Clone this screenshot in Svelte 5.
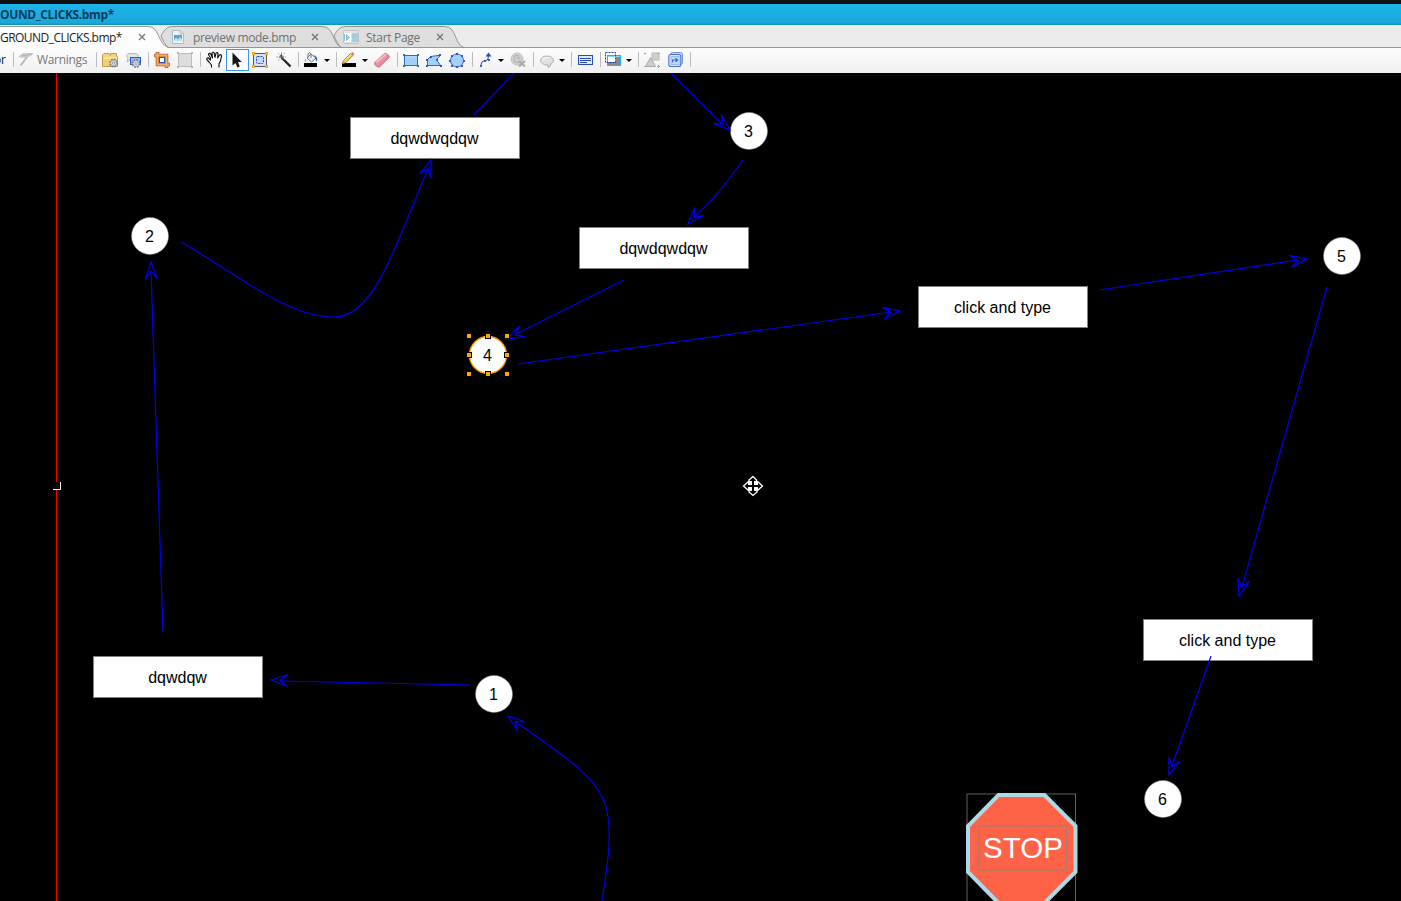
<script>
  const gear = (x, y) =>
    `<circle cx="${x}" cy="${y}" r="3.6" fill="#d5d8dc" stroke="#70757c" stroke-width="1.6" stroke-dasharray="1.7 1.1"/><circle cx="${x}" cy="${y}" r="3" fill="#dfe2e5" stroke="#8a8f96" stroke-width=".7"/><circle cx="${x}" cy="${y}" r="1.1" fill="#fff" stroke="#777" stroke-width=".7"/>`;
  const dots = (pts, c) => pts.map(([x, y]) => `<rect x="${x}" y="${y}" width="2" height="2" fill="${c}"/>`).join('');

  // x is the left edge of each item along the toolbar, w its width
  const tools = [
    { x: 13, sep: true },
    { x: 18, w: 17, art: `<path d="M0 6 5 2H15.500L12 6 11 5 3.500 15 1.500 14 7 7Z" fill="#c9c9c9"/><path d="M4 5 14 3M3 14 10 5" stroke="#b4b4b4" fill="none"/>` },
    { x: 37, w: 52, label: 'Warnings' },
    { x: 96, sep: true },
    { x: 102, w: 18, art: `<path d="M.5 15.500V4L2 2.500H7L8.500 4.500V2.500H14.500V5L15.500 6V15.500Z" fill="#f3d47c" stroke="#c39c4b"/><path d="M1.500 7H15" stroke="#fff0b8"/><path d="M1 8H15V15H1Z" fill="#efcf77"/>${gear(11.5, 12)}` },
    { x: 126, w: 18, art: `<path d="M4 9 1 11 2 8Q-1 4 3 2.500H9Q13 3 12 6Q11 9 7 9Z" fill="#e2e5e9" stroke="#b5bac1"/><rect x="4.500" y="6.500" width="10" height="7" fill="#8cbcf3" stroke="#285bc5"/>${gear(10, 12.5)}` },
    { x: 148, sep: true },
    { x: 154, w: 17, art: `<path d="M3.500 1V13.500H16M0 4.500H12.500V17" fill="none" stroke="#b9642a" stroke-width="3.600"/><path d="M3.500 1.700V13.500H15.300M.7 4.500H12.500V16.300" fill="none" stroke="#f2ae68" stroke-width="1.800"/><rect x="5.500" y="6.500" width="5" height="5" fill="#fff" stroke="#2358be"/>` },
    { x: 177, w: 17, art: `<rect x="1.500" y="2.500" width="13" height="13" fill="#dcdcdc" stroke="#bdbdbd"/>${dots([[0,1],[14,1],[0,15],[14,15]], '#b4b4b4')}` },
    { x: 200, sep: true },
    { x: 206, w: 18, art: `<path d="M5.500 16.500V14L3 11 .8 8.500Q.5 6.500 2.500 7L4.500 9V7L2.500 3.500Q3 1.500 4.800 3L6.500 7 6 2Q7 .5 8.200 2L9 6.500 10 2Q11.500 .8 12 2.800L11.600 7 13.500 4Q15.500 3 15.500 5L14.500 10 13 13V16.500" fill="#fff" stroke="#111" stroke-width="1.150" stroke-linejoin="round"/>` },
    { x: 226, w: 23, on: true, art: `<path d="M5.500 1.500V14.500L8.500 12 10.500 16.500 12.800 15.500 11 11H14.800Z" fill="#161616"/>` },
    { x: 252, w: 17, art: `<rect x="1.500" y="2.500" width="13" height="13" fill="#d8e3f5" stroke="#555"/><path d="M0 1H3V4H0ZM13 1H16V4H13ZM0 14H3V17H0ZM13 14H16V17H13Z" fill="#f9ae1c"/><rect x="4.500" y="5.500" width="7" height="7" rx="1" fill="#c6d7ff" stroke="#2948cc" stroke-dasharray="2 1"/>` },
    { x: 276, w: 17, art: `<path d="M6 7 14.500 15.500" stroke="#222" stroke-width="2.300"/><path d="M5.500 1V10M0 6H10M2 2 9 9M2 10 9 2" stroke="#a8a8a8" stroke-dasharray="2 1"/><path d="M5.500 3V8M3 6H8M4 4 7 8" stroke="#555"/>` },
    { x: 298, sep: true },
    { x: 304, w: 17, art: `<path d="M3 7 7 3 12 7 7.500 11Z" fill="#eef3f8" stroke="#777"/><path d="M4 6V3Q5 0 7 3V7" fill="none" stroke="#6b7582"/><path d="M10 4Q15 6 12.500 11L11 7Z" fill="#3a78c6"/><path d="M2 8Q0 10 2 11" fill="none" stroke="#8baac5"/><path d="M0 12H13V16H0Z" fill="#000"/>` },
    { x: 324, w: 7, drop: true },
    { x: 336, sep: true },
    { x: 341, w: 17, art: `<path d="M1 12H15V16H1Z" fill="#000"/><path d="M1 13 2.500 9.500 9.500 2.500 12 4.500 5 11.500Z" fill="#eacb54" stroke="#8d7631" stroke-width=".8"/><path d="M9.500 2.500 11.500 1 13.500 3 12 4.500Z" fill="#db7883"/><path d="M3.500 9.500 10.500 3" stroke="#fff0a5"/>` },
    { x: 362, w: 7, drop: true },
    { x: 374, w: 17, art: `<path d="M.7 11.500 10.500 2.500Q12 1.500 14.800 4.500 16 6 14.700 7L5.500 16Q4 16.500 1.500 14.500 .3 13 .7 11.500Z" fill="#e994a1" stroke="#c97483"/><path d="M2 11.500 12 3" stroke="#f6b9c1" stroke-width="2"/><path d="M5 14.500 14 6" stroke="#d87a8a"/>` },
    { x: 397, sep: true },
    { x: 403, w: 17, art: `<rect x="1.500" y="4.500" width="13" height="10" fill="#a2d0fb" stroke="#3a62c8"/>${dots([[0,3],[14,3],[0,14],[14,14]], '#23855d')}<path d="M3 6H13" stroke="#b8deff"/>` },
    { x: 426, w: 17, art: `<path d="M1.500 14.500V8.500L4.500 5.500 12 4.500H14.500L10.500 8.500 14.500 14.500Z" fill="#a2d0fb" stroke="#3a62c8"/>${dots([[0,14],[0,8],[4,5],[13,3],[10,8],[14,14]], '#3159b8')}` },
    { x: 449, w: 17, art: `<circle cx="8" cy="9.500" r="6.500" fill="#a2d0fb" stroke="#3a62c8"/>${dots([[7,2],[2,4],[12,4],[0,9],[14,9],[2,14],[12,14],[7,15]], '#3159b8')}` },
    { x: 472, sep: true },
    { x: 479, w: 17, art: `<path d="M2 15Q2 9.500 7 9.500 9.500 9.500 9.500 3" fill="none" stroke="#2f59bb" stroke-width="1.100"/><path d="M6.500 5.500 9.500 1.500 12.500 5.500Z" fill="#2450b5"/>${dots([[1,14],[5,9],[9,8]], '#3560bb')}` },
    { x: 498, w: 7, drop: true },
    { x: 510, w: 18, art: `<circle cx="7" cy="8" r="6" fill="#cfcfcf" stroke="#c2c2c2"/><path d="M9 5Q4 3 4 8T9 11M7 7H10" fill="none" stroke="#aaa"/><path d="M9 10 15 15.500M15 10 9 15.500" stroke="#aaa" stroke-width="2"/>` },
    { x: 533, sep: true },
    { x: 540, w: 16, art: `<ellipse cx="7" cy="9.500" rx="6.500" ry="4.500" fill="#e2e2e5" stroke="#b0b0b3"/><path d="M7 13.500Q9 15 8 16.500 11 15.500 11 12.500" fill="#ddd" stroke="#aaa"/><path d="M2.500 8Q6 5.500 10 7" fill="none" stroke="#fff"/>` },
    { x: 559, w: 7, drop: true },
    { x: 571, sep: true },
    { x: 577, w: 17, art: `<rect x="1.500" y="4.500" width="14" height="9" fill="#dce8fd" stroke="#244fc3"/><path d="M3 7.500H14M3 9.500H14M3 11.500H10" stroke="#2d4f9f"/>` },
    { x: 600, sep: true },
    { x: 605, w: 17, art: `<rect x="2.500" y="4.500" width="13" height="10" fill="#85888c" stroke="#22b3ed"/><path d="M3 5.500H15" stroke="#8bd9fa"/><rect x="3" y="6" width="8" height="5" fill="#fff"/><rect x=".5" y="1.500" width="10" height="10" fill="none" stroke="#2445a2" stroke-dasharray="2 1"/>` },
    { x: 626, w: 7, drop: true },
    { x: 638, sep: true },
    { x: 644, w: 17, art: `<rect x="8" y="2" width="7" height="7" fill="#cfcfcf" stroke="#bababa"/><path d="M1.500 15.500 6.500 6.500 11.500 15.500Z" fill="#ccc" stroke="#aaa"/><path d="M0 2.500H2M1 1.500V3.500M13 2.500H16M0 15.500H2M13 15.500H16M14.500 14V17" stroke="#aaa"/>` },
    { x: 668, w: 17, art: `<rect x="2.500" y="1.500" width="12" height="12" rx="2" fill="#c3d9fa" stroke="#6e91df"/><rect x=".8" y="3.500" width="12" height="12" rx="2" fill="#dce9fc" stroke="#4a72d3" stroke-width="1.100"/><rect x="3" y="5.500" width="8" height="8" fill="#c3dbfb" stroke="#9abcef"/><path d="M4.500 11.500V9H9M7.500 7 9.500 9 7.500 11" fill="none" stroke="#3f63bd" stroke-width="1.100"/>` },
    { x: 690, sep: true }
  ];
  const toolEnd = (t) => t.x + (t.sep ? 1 : t.w);
  const items = tools.map((t, i) => ({ ...t, gap: t.x - (i ? toolEnd(tools[i - 1]) : 8) }));

  // curve of each connector, followed by its tip and heading in degrees
  const links = [
    { d: 'M474 115 L514 73' },
    { d: 'M671 73 L721 123', tip: [730, 130], a: 41 },
    { d: 'M743 160 Q716 198 694 217', tip: [688, 224], a: 132 },
    { d: 'M624 280 L516 334', tip: [507, 339], a: 153 },
    { d: 'M518 364 L891 312', tip: [900, 311], a: -8 },
    { d: 'M1099 290 L1298 260', tip: [1307, 259], a: -8.5 },
    { d: 'M1327 287 L1242 587', tip: [1239, 596], a: 106 },
    { d: 'M1211 656 L1172 766', tip: [1169, 775], a: 109 },
    { d: 'M181 242 C240 276 287 317 334 317 C374 317 393 251 428 169', tip: [431, 160], a: -70 },
    { d: 'M163 632 L151 271', tip: [151, 262], a: -91 },
    { d: 'M470 685 L280 681', tip: [271, 680], a: 181.5 },
    { d: 'M602 901 C608 862 612 835 607 811 C600 776 560 754 516 722', tip: [508, 716], a: 218 }
  ];
  const boxes = [
    [350, 117, 'dqwdwqdqw'], [579, 227, 'dqwdqwdqw'], [918, 286, 'click and type'],
    [1143, 619, 'click and type'], [93, 656, 'dqwdqw']
  ];
  const nodes = [[494, 694, 1], [150, 236, 2], [749, 131, 3], [488, 355, 4], [1342, 256, 5], [1163, 799, 6]];
  const handles = [[469, 336], [488, 336], [507, 336], [469, 355], [507, 355], [469, 374], [488, 374], [507, 374]];
</script>

<div class="app">
  <header class="title">OUND_CLICKS.bmp*</header>

  <nav class="tabs">
    <div class="tab active">
      <svg class="shape" width="168" height="23" viewBox="0 0 168 23"><path d="M0 1.500H148C160 1.500 157 18 168 22.500V23H0Z" fill="#fdfdfd"/><path d="M0 1.500H148C160 1.500 157 18 168 22.500" fill="none" stroke="#969696"/></svg>
      <span class="name first">GROUND_CLICKS.bmp*</span>{@render close()}
    </div>
    <div class="tab second">
      <svg class="shape" width="184" height="23" viewBox="0 0 184 23"><path d="M1 11C4 5 7 1.500 13 1.500H162C175 1.500 172 20 182 22.500H8Q5 20 1 11Z" fill="#dedede" stroke="#969696"/></svg>
      <svg class="ticon" width="14" height="16" viewBox="0 0 14 16"><path d="M1.500 1.500H9L12.500 5V14.500H1.500Z" fill="#edf3f6" stroke="#a7bdc9"/><path d="M9 1.500V5H12.500" fill="none" stroke="#a7bdc9"/><path d="M3 6H11V12H3Z" fill="#5fa3cb"/><path d="M3 11 5 8.500 7 10.500 9 8 11 10V12H3Z" fill="#bde0ef"/></svg>
      <span class="name">preview mode.bmp</span>{@render close()}
    </div>
    <div class="tab third">
      <svg class="shape" width="134" height="23" viewBox="0 0 134 23"><path d="M1 11C4 5 7 1.500 13 1.500H112C124 1.500 121 20 131 22.500H8Q5 20 1 11Z" fill="#dedede" stroke="#969696"/></svg>
      <svg class="ticon" width="16" height="14" viewBox="0 0 16 14"><rect x=".5" y=".5" width="15" height="13" rx="1" fill="#e4e4e4" stroke="#c3c3c3"/><path d="M1 3H8V12H1Z" fill="#fff"/><path d="M9 3H15V12H9Z" fill="#a5cde0"/><path d="M1.500 4V11M3.500 4.500 6.500 7.500 3.500 10.500Z" fill="#a5cde0" stroke="#8dbfd8"/></svg>
      <span class="name">Start Page</span>{@render close()}
    </div>
  </nav>

  <div class="toolbar">
    <span class="cut">or</span>
    {#each items as t}
      <span class="item" class:on={t.on} style:margin-left="{t.gap}px" style:width="{t.sep ? 1 : t.w}px">
        {#if t.sep}<i class="sep"></i>
        {:else if t.drop}<i class="drop"></i>
        {:else if t.label}<span class="label">{t.label}</span>
        {:else}<svg width="18" height="18" viewBox="0 0 18 18">{@html t.art}</svg>{/if}
      </span>
    {/each}
  </div>

  <svg class="canvas" width="1401" height="828" viewBox="0 73 1401 828">
    <path d="M56.500 73V482M56.500 490V901" stroke="#ff0000" />
    <path d="M53 489.500H60.500V482" fill="none" stroke="#fff" />

    {#each boxes as [x, y, text]}
      <rect x={x + 0.5} y={y + 0.5} width="169" height="41" fill="#fff" stroke="#808080" />
      <text x={x + 84.5} y={y + 27}>{text}</text>
    {/each}
    {#each nodes as [x, y, n]}
      <circle cx={x} cy={y} r="18.500" fill="#fff" stroke={n === 4 ? '#ff9d00' : '#888'} stroke-width={n === 4 ? 1.4 : 0.5} />
      <text x={x - 0.5} y={y + 6}>{n}</text>
    {/each}

    {#each links as l}
      <path d={l.d} class="link" />
      {#if l.tip}
        <path d="M-9 0 L-17 -6 L0 0 L-17 6 Z" class="link" transform="translate({l.tip[0]} {l.tip[1]}) rotate({l.a})" />
      {/if}
    {/each}

    {#each handles as [x, y]}
      <rect x={x - 2.5} y={y - 2.5} width="5" height="5" fill="#ffa500" stroke="#000" />
    {/each}

    <rect x="967" y="794" width="108.500" height="120" fill="none" stroke="#606060" />
    <path d="M998.500 795 H1044.500 L1075.500 826 V872 L1044.500 903 H998.500 L968 872 V826 Z" fill="#ff6347" stroke="#add8e6" stroke-width="4" />
    <rect x="979" y="826" width="87.500" height="44" fill="none" stroke="#b0786a" stroke-width="1.300" />
    <text x="1023" y="858" class="stop">STOP</text>

    <g transform="translate(753 486)">
      <path d="M0 -9.500 L3.500 -6 V-4 H5 L9.500 0 L5 4 H4 V6 L0 9.500 L-4 6 V4 H-5 L-9.500 0 L-5 -4 H-4 V-6 Z" fill="#000" stroke="#fff" stroke-width="1.300" />
      <path d="M-5 -5H-1V-1H-5ZM1 -5H5V-1H1ZM-5 1H-1V5H-5ZM1 1H5V5H1Z" fill="#fff" />
    </g>
  </svg>
</div>

{#snippet close()}
  <svg class="close" width="8" height="8" viewBox="0 0 8 8"><path d="M1 1 7 7M7 1 1 7" stroke="#777" stroke-width="1.400" /></svg>
{/snippet}

<style>
  :global(body) { margin: 0; background: #000; overflow: hidden; }
  .app { width: 1401px; height: 901px; display: flex; flex-direction: column; overflow: hidden; font: 12px "Open Sans", "Noto Sans", sans-serif; }
  .title { flex: none; box-sizing: border-box; border-top: 4px solid #101010; height: 25px; background: linear-gradient(#1db4ea, #19a7dc 90%, #168cb9); color: #073b58; font-weight: 700; font-size: 12px; line-height: 21px; letter-spacing: -0.37px; white-space: nowrap; }
  .tabs { height: 23px; flex: none; display: flex; background: #ececec; box-shadow: inset 0 -1px #969696; }
  .tab { position: relative; display: flex; align-items: center; height: 23px; color: #707070; box-sizing: border-box; white-space: nowrap; }
  .tab > span { position: relative; }
  .shape { position: absolute; left: 0; top: 0; }
  .active { width: 160px; color: #222; z-index: 2; }
  .second { width: 173px; padding-left: 11px; z-index: 1; }
  .third { width: 134px; padding-left: 10px; }
  .ticon { position: relative; flex: none; }
  .name { flex: none; width: 118px; margin-left: 8px; line-height: 23px; padding-top: 2px; letter-spacing: -0.34px; }
  .first { width: 138px; margin-left: 0; letter-spacing: -0.53px; }
  .third .name { width: 70px; margin-left: 7px; letter-spacing: -0.3px; }
  .close { position: relative; flex: none; margin-top: 1px; }
  .toolbar { height: 25px; box-sizing: border-box; padding-bottom: 2px; flex: none; display: flex; align-items: center; background: linear-gradient(#fdfdfd, #f0f0f0); overflow: hidden; }
  .cut { width: 8px; flex: none; direction: rtl; overflow: hidden; color: #111; line-height: 22px; box-sizing: border-box; padding-right: 2px; }
  .item { flex: none; height: 22px; display: flex; align-items: center; overflow: visible; box-sizing: border-box; }
  .item svg { flex: none; overflow: visible; margin-top: 1px; }
  .on { border: 1px solid #3897ef; background: #fafcff; }
  .sep { width: 1px; height: 15px; background: #bcbcbc; }
  .drop { border: 3px solid transparent; border-top-color: #000; border-bottom: 0; margin-top: 2px; }
  .label { color: #777; letter-spacing: -0.32px; }
  .canvas { display: block; flex: none; background: #000; }
  .link { fill: none; stroke: #0000f0; stroke-width: 1.2; }
  text { font: 16px "Liberation Sans", Arial, sans-serif; text-anchor: middle; fill: #000; }
  .stop { font-size: 29.5px; fill: #fff; }
</style>
